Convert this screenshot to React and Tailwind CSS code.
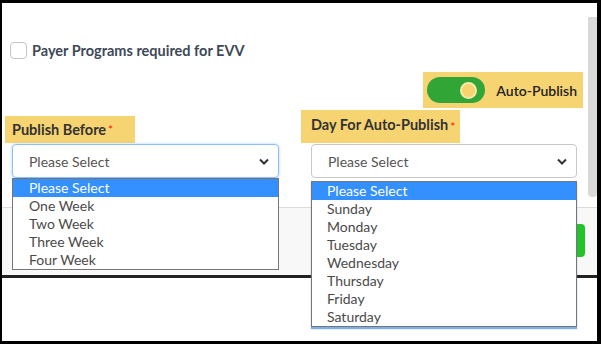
import { useState } from 'react';

const weeks = ['Please Select', 'One Week', 'Two Week', 'Three Week', 'Four Week'];
const days = ['Please Select', 'Sunday', 'Monday', 'Tuesday', 'Wednesday', 'Thursday', 'Friday', 'Saturday'];

function Chevron() {
  return (
    <svg width="10" height="7" viewBox="0 0 10 7" className="shrink-0">
      <path d="M1 1.5 L5 5.5 L9 1.5" fill="none" stroke="#333" strokeWidth="2" />
    </svg>
  );
}

function OptionList({ items, className }) {
  return (
    <ul className={`absolute bg-white border border-[#767676] z-10 ${className}`}>
      {items.map((item, i) => (
        <li
          key={item}
          className={`h-[18px] leading-[18px] text-[14px] ${i === 0 ? 'bg-[#3390fe] text-white' : 'text-[#4a4a4a]'}`}
        >
          {item}
        </li>
      ))}
    </ul>
  );
}

export default function App() {
  const [autoPublish, setAutoPublish] = useState(true);
  const [evv, setEvv] = useState(false);

  return (
    <div className="w-[601px] h-[344px] bg-white border-t-[3px] border-l-2 border-r-[4px] border-b-[3px] border-black flex flex-col [font-family:Lato,sans-serif]">
      {/* modal */}
      <div className="flex flex-col border-b-[3px] border-[#222]">
        <div className="h-[204px] flex">
          <div className="flex-1 flex flex-col">
            <label className="mt-[39px] ml-[8px] flex items-center gap-[5px] h-[17px]">
              <button
                onClick={() => setEvv(!evv)}
                className={`w-[17px] h-[17px] rounded-[4px] border border-[#c4c4c4] ${evv ? 'bg-[#31a535]' : 'bg-white'}`}
              ></button>
              <span className="text-[14.5px] font-bold text-[#3d4858]">Payer Programs required for EVV</span>
            </label>

            <div className="mt-[13px] self-end mr-[5px] h-[36px] bg-[#f7d472] flex items-center pl-[4px] pr-[6px] gap-[11px]">
              <button
                onClick={() => setAutoPublish(!autoPublish)}
                className={`w-[58px] h-[26px] rounded-full flex items-center px-[8px] ${autoPublish ? 'bg-[#31a535] justify-end' : 'bg-gray-300 justify-start'}`}
              >
                <span className="w-[17px] h-[17px] rounded-full bg-[#f6d36c] border-2 border-[#fbe9a9]"></span>
              </button>
              <span className="text-[14px] font-semibold text-[#222]">Auto-Publish</span>
            </div>

            <div className="mt-[2px] flex">
              <div className="w-[299px] pl-[3px] flex flex-col">
                <div className="h-[33px] flex items-end">
                  <div className="w-[130px] h-[27px] bg-[#f7d472] pl-[7px] flex items-center">
                    <span className="text-[14.5px] font-bold text-[#333]">Publish Before</span>
                    <span className="text-[12px] text-[#ff1010] ml-[2px] self-start mt-[5px]">*</span>
                  </div>
                </div>
                <div className="relative ml-[7px] mt-[1px] w-[267px]">
                  <div className="h-[34px] rounded-[4px] border border-[#8ebff5] shadow-[0_0_3px_rgba(90,160,240,0.5)] flex items-center pl-[16px] pr-[9px] justify-between">
                    <span className="text-[14px] text-[#555]">Please Select</span>
                    <Chevron />
                  </div>
                  <OptionList items={weeks} className="top-full left-0 w-[267px] [&>li]:pl-[16px]" />
                </div>
              </div>

              <div className="flex flex-col">
                <div className="w-[159px] h-[33px] bg-[#f7d472] pl-[10px] flex items-center pb-[3px]">
                  <span className="text-[14.5px] font-bold text-[#333]">Day For Auto-Publish</span>
                  <span className="text-[12px] text-[#ff1010] ml-[2px] self-start mt-[8px]">*</span>
                </div>
                <div className="relative ml-[10px] mt-[1px] w-[266px]">
                  <div className="h-[34px] rounded-[4px] border border-[#c8c8c8] flex items-center pl-[16px] pr-[9px] justify-between">
                    <span className="text-[14px] text-[#555]">Please Select</span>
                    <Chevron />
                  </div>
                  <OptionList
                    items={days}
                    className="top-[37px] left-0 w-[266px] shadow-[0_2px_1px_rgba(70,140,220,0.7)] [&>li]:pl-[15px]"
                  />
                </div>
              </div>
            </div>
          </div>

          {/* scrollbar */}
          <div className="w-[9px]">
            <div className="mt-[14px] h-[180px] bg-[#d9d9d9] rounded-b-[4px]"></div>
          </div>
        </div>

        <div className="h-[68px] border-t border-[#dcdcdc] bg-[#f8f8f8] flex justify-end items-start pt-[16px] pr-[12px]">
          <button className="h-[33px] px-[18px] rounded-[4px] bg-[#22c32a] text-white text-[14px] font-bold">Save</button>
        </div>
      </div>

      <div className="flex-1 bg-white"></div>
    </div>
  );
}
